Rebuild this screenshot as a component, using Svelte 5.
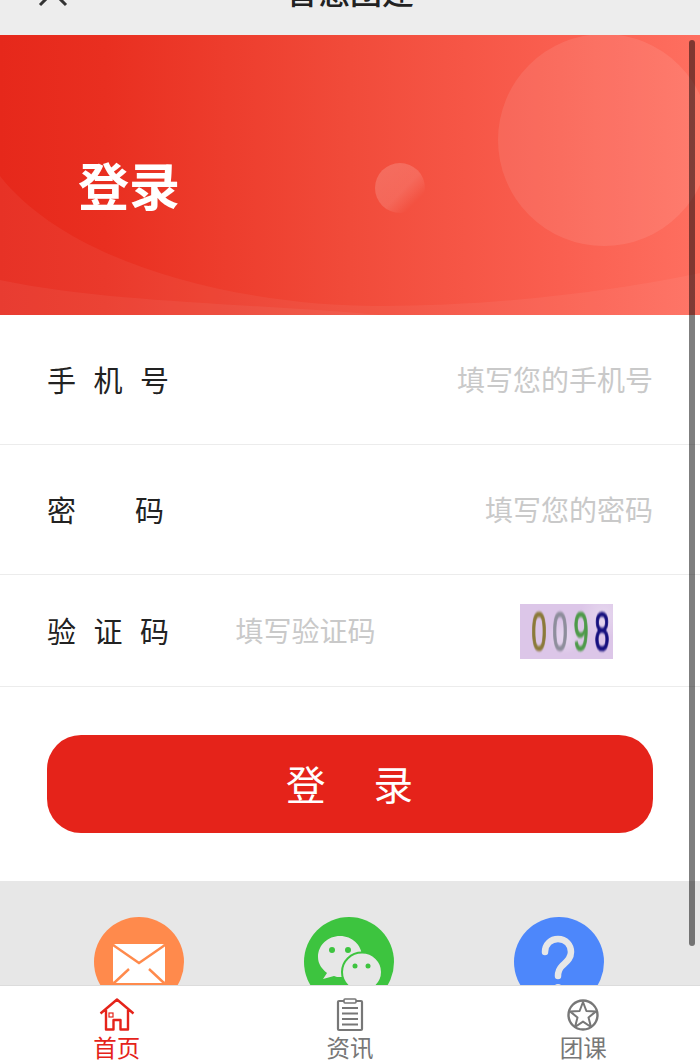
<script lang="ts">
	const digits = [
		{ ch: '0', color: '#8b7a3a' },
		{ ch: '0', color: '#8e8e9c' },
		{ ch: '9', color: '#4e9a4a' },
		{ ch: '8', color: '#16107e' }
	];
</script>

<div class="page">
	<div class="scroll-area">
		<header class="topbar">
			<svg class="close" viewBox="0 0 40 40" width="40" height="40" aria-hidden="true">
				<path d="M7 7 L33 33 M33 7 L7 33" stroke="#333" stroke-width="3" fill="none" />
			</svg>
			<span class="topbar-title">智慧团建</span>
		</header>

		<section class="hero">
			<svg class="hero-art" viewBox="0 0 700 280" preserveAspectRatio="none" aria-hidden="true">
				<defs>
					<linearGradient id="sky" x1="0" y1="0" x2="1" y2="0">
						<stop offset="0" stop-color="#e6281b" />
						<stop offset="0.15" stop-color="#e92f20" />
						<stop offset="0.5" stop-color="#f14b3a" />
						<stop offset="0.8" stop-color="#fa5f50" />
						<stop offset="1" stop-color="#fe6f60" />
					</linearGradient>
					<linearGradient id="dot" x1="0" y1="0" x2="1" y2="1">
						<stop offset="0" stop-color="#fff" stop-opacity="0.18" />
						<stop offset="0.55" stop-color="#fff" stop-opacity="0.14" />
						<stop offset="0.8" stop-color="#fff" stop-opacity="0" />
					</linearGradient>
				</defs>
				<rect width="700" height="280" fill="url(#sky)" />
				<circle cx="604" cy="105" r="106" fill="#fff" opacity="0.09" />
				<circle cx="400" cy="153" r="25" fill="url(#dot)" />
				<path d="M0 141 C70 230 240 271 380 271 C500 271 620 255 700 238 V280 H0 Z" fill="#fff" opacity="0.05" />
				<path d="M0 245 C110 268 250 268 380 280 H0 Z" fill="#fff" opacity="0.05" />
			</svg>
			<h1 class="hero-title">登录</h1>
		</section>

		<form class="form" onsubmit={(e) => e.preventDefault()}>
			<div class="row row-tall">
				<span class="label">手机号</span>
				<span class="placeholder right">填写您的手机号</span>
			</div>
			<div class="row row-tall">
				<span class="label wide">密码</span>
				<span class="placeholder right">填写您的密码</span>
			</div>
			<div class="row row-code">
				<span class="label">验证码</span>
				<span class="placeholder code-input">填写验证码</span>
				<div class="captcha">
					{#each digits as d}
						<span style="color: {d.color}">{d.ch}</span>
					{/each}
				</div>
			</div>
			<div class="submit-wrap">
				<button class="submit" type="submit">登录</button>
			</div>
		</form>

		<section class="links">
			<div class="link-circle orange">
				<svg viewBox="0 0 90 90" width="90" height="90" aria-hidden="true">
					<rect x="19" y="27" width="52" height="39" rx="3" fill="#fff" />
					<path d="M19 28 L45 46 L71 28 M20 66 L35 52 M70 66 L55 52" stroke="#ff8a4c" stroke-width="2.4" fill="none" />
				</svg>
			</div>
			<div class="link-circle green">
				<svg viewBox="0 0 90 90" width="90" height="90" aria-hidden="true">
					<path d="M36 19 C24 19 14 28 14 40 C14 47 18 52 23 56 L19 62 L30 59 C32 60 34 60 36 60 C48 60 58 52 58 40 C58 28 48 19 36 19 Z" fill="#e7e7e7" />
					<ellipse cx="58" cy="55" rx="20" ry="19.5" fill="#e7e7e7" stroke="#3dc43f" stroke-width="2" />
					<circle cx="28" cy="33" r="3" fill="#3dc43f" />
					<circle cx="44" cy="33" r="3" fill="#3dc43f" />
					<circle cx="51" cy="49" r="2.5" fill="#3dc43f" />
					<circle cx="64" cy="49" r="2.5" fill="#3dc43f" />
				</svg>
			</div>
			<div class="link-circle blue">
				<svg viewBox="0 0 90 90" width="90" height="90" aria-hidden="true">
					<path d="M31 35 C31 27 37 22 44 22 C52 22 57 28 57 35 C57 42 52 45 48 49 C45 52 44 55 44 59" stroke="#e7e7e7" stroke-width="6.5" stroke-linecap="round" fill="none" />
					<circle cx="44" cy="71" r="4" fill="#e7e7e7" />
				</svg>
			</div>
		</section>

		<div class="scrollbar"></div>
	</div>

	<nav class="tabbar">
		<div class="tab active">
			<svg viewBox="0 0 36 34" width="36" height="34" aria-hidden="true">
				<path d="M1.5 15.5 L18 1.5 L34.5 15.5 M7 12 V31.5 H14.5 V22 H21.5 V31.5 H29 V12" stroke="#e5231a" stroke-width="2.4" fill="none" stroke-linejoin="round" />
				<rect x="10" y="15" width="4" height="4" stroke="#e5231a" stroke-width="1.2" fill="none" />
			</svg>
			<span>首页</span>
		</div>
		<div class="tab">
			<svg viewBox="0 0 36 34" width="36" height="34" aria-hidden="true">
				<path d="M12 3 H7 Q6 3 6 4 V31 Q6 32 7 32 H29 Q30 32 30 31 V4 Q30 3 29 3 H24" stroke="#777" stroke-width="2.2" fill="none" />
				<rect x="12" y="1" width="12" height="4" rx="1" stroke="#777" stroke-width="1.6" fill="none" />
				<path d="M10 10 H26 M10 15.5 H26 M10 21 H26 M10 26.5 H26" stroke="#777" stroke-width="2.2" fill="none" />
			</svg>
			<span>资讯</span>
		</div>
		<div class="tab">
			<svg viewBox="0 0 36 34" width="36" height="34" aria-hidden="true">
				<circle cx="18" cy="17" r="14.5" stroke="#777" stroke-width="2.4" fill="none" />
				<path d="M18 4 L21.4 13 L31 13.4 L23.5 19.5 L26 29 L18 23.6 L10 29 L12.5 19.5 L5 13.4 L14.6 13 Z" stroke="#777" stroke-width="2" fill="none" stroke-linejoin="round" />
			</svg>
			<span>团课</span>
		</div>
	</nav>
</div>

<style>
	:global(body) {
		font-family: 'Noto Sans CJK SC', 'Liberation Sans', sans-serif;
	}

	.page {
		display: flex;
		flex-direction: column;
		height: 100vh;
		overflow: hidden;
		background: #fff;
	}

	.scroll-area {
		position: relative;
		flex: 1;
		min-height: 0;
		overflow: hidden;
		background: #e7e7e7;
	}

	.topbar {
		position: relative;
		height: 35px;
		display: flex;
		justify-content: center;
		align-items: flex-end;
		overflow: hidden;
		background: #ededed;
	}

	.topbar-title {
		flex: none;
		font-size: 32px;
		line-height: 60px;
		margin-bottom: 15px;
		font-weight: 500;
		color: #222;
		white-space: nowrap;
	}

	.close {
		position: absolute;
		left: 33px;
		top: -28px;
	}

	.hero {
		position: relative;
		height: 280px;
		display: flex;
		align-items: center;
		padding-left: 78px;
		box-sizing: border-box;
		overflow: hidden;
	}

	.hero-art {
		position: absolute;
		inset: 0;
		width: 100%;
		height: 100%;
	}

	.hero-title {
		position: relative;
		margin: 17px 0 0;
		font-size: 51px;
		line-height: 60px;
		font-weight: 700;
		color: #fff;
	}

	.form {
		background: #fff;
		display: block;
	}

	.row {
		display: flex;
		align-items: center;
		padding: 0 47px 2px;
		border-bottom: 1px solid #ececec;
		box-sizing: border-box;
		margin: 0;
	}

	.row-tall {
		height: 130px;
	}

	.row-code {
		height: 112px;
	}

	.label {
		font-size: 29px;
		color: #222;
		white-space: nowrap;
		letter-spacing: 17.5px;
	}

	.label.wide {
		letter-spacing: 59px;
	}

	.placeholder {
		font-size: 28px;
		color: #c9c9c9;
		white-space: nowrap;
	}

	.right {
		margin-left: auto;
	}

	.code-input {
		margin-left: 49px;
	}

	.captcha {
		margin: 4px 40px 0 auto;
		width: 93px;
		height: 55px;
		display: flex;
		align-items: center;
		padding-left: 8px;
		box-sizing: border-box;
		background:
			radial-gradient(circle at 48% 60%, rgba(255, 255, 255, 0.35), transparent 30%),
			radial-gradient(circle at 90% 20%, rgba(255, 255, 255, 0.3), transparent 25%),
			#dcc6e8;
		font-family: 'Liberation Sans', sans-serif;
		font-size: 54px;
		line-height: 55px;
	}

	.captcha span {
		flex: none;
		margin: 0 -4.5px;
		transform: scaleX(0.5);
		filter: blur(0.8px);
		-webkit-text-stroke: 1.5px currentColor;
	}

	.submit-wrap {
		padding: 48px 47px;
	}

	.submit {
		display: block;
		width: 100%;
		height: 98px;
		padding: 0 0 4px 47px;
		border: none;
		border-radius: 34px;
		background: #e5231a;
		color: #fff;
		font-family: inherit;
		font-size: 39.5px;
		letter-spacing: 48px;
	}

	.links {
		display: flex;
		padding: 36px 96px 0 94px;
		justify-content: space-between;
	}

	.link-circle {
		width: 90px;
		height: 90px;
		border-radius: 50%;
		display: flex;
		align-items: center;
		justify-content: center;
	}

	.orange {
		background: #ff8a4c;
	}

	.green {
		background: #3dc43f;
	}

	.blue {
		background: #4d87fb;
	}

	.scrollbar {
		position: absolute;
		top: 40px;
		left: 689px;
		width: 6px;
		height: 906px;
		border-radius: 3px;
		background: rgba(0, 0, 0, 0.5);
	}

	.tabbar {
		flex: none;
		height: 76px;
		display: grid;
		grid-template-columns: repeat(3, 1fr);
		background: #fff;
		border-top: 1px solid #dcdcdc;
		box-sizing: border-box;
	}

	.tab {
		display: flex;
		flex-direction: column;
		align-items: center;
		padding-top: 12px;
		color: #777;
		font-size: 23.5px;
		line-height: 26px;
	}

	.tab svg {
		flex: none;
		margin-bottom: 2px;
	}

	.tab.active {
		color: #e5231a;
	}
</style>
